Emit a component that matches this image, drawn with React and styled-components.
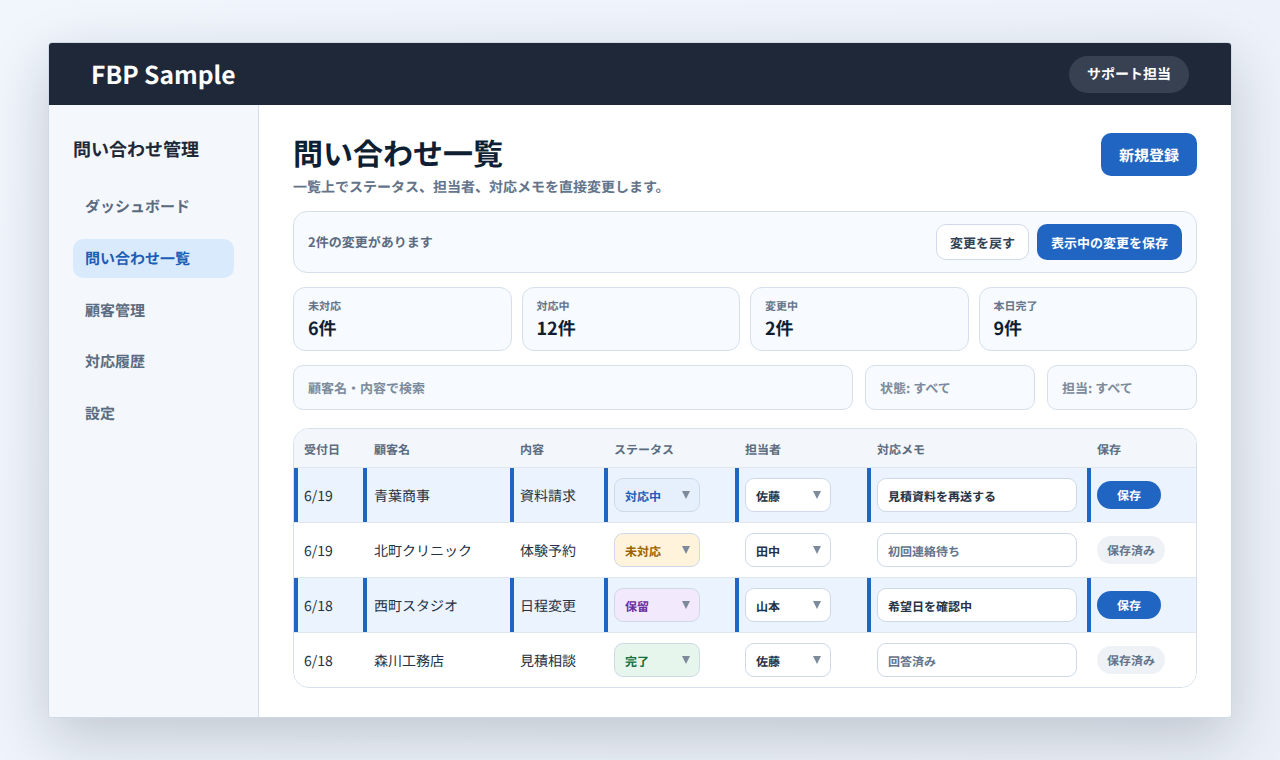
import React from 'react';
import styled, { createGlobalStyle } from 'styled-components';

const GlobalStyle = createGlobalStyle`
  * { box-sizing: border-box; }
  html, body { margin: 0; height: 100%; }
  body {
    background: linear-gradient(135deg, #f1f6fd 0%, #ebf0f8 100%);
    font-family: "Noto Sans CJK JP", "Noto Sans", sans-serif;
    color: #0f1f33;
    overflow: hidden;
    text-rendering: geometricPrecision;
  }
`;

const Page = styled.div`
  height: 760px;
  padding: 42px 48px;
`;

const Shell = styled.div`
  height: 676px;
  display: flex;
  flex-direction: column;
  background: #fff;
  border: 1px solid #d0dae6;
  border-radius: 4px;
  overflow: hidden;
  box-shadow: 0 20px 60px rgba(15, 23, 42, 0.2);
`;

const TopBar = styled.header`
  height: 62px;
  flex: none;
  display: flex;
  align-items: center;
  justify-content: space-between;
  padding: 0 42px;
  background: #1e2838;
`;

const Brand = styled.div`
  font-size: 24.6px;
  font-weight: 700;
  color: #fff;
`;

const UserPill = styled.div`
  height: 37px;
  width: 120px;
  display: flex;
  align-items: center;
  justify-content: center;
  border-radius: 19px;
  background: #374151;
  color: #fff;
  font-size: 14px;
  font-weight: 700;
`;

const Body = styled.div`
  flex: 1;
  display: flex;
  min-height: 0;
`;

const Sidebar = styled.aside`
  width: 210px;
  flex: none;
  padding: 30px 24px;
  background: #f4f8fd;
  border-right: 1px solid #d5dee9;
`;

const SideTitle = styled.div`
  font-size: 18px;
  font-weight: 700;
  line-height: 28px;
  color: #1e2838;
  margin-bottom: 24px;
`;

const NavList = styled.nav`
  display: flex;
  flex-direction: column;
  gap: 12.75px;
`;

const NavItem = styled.div`
  height: 39px;
  display: flex;
  align-items: center;
  padding: 0 12px;
  border-radius: 10px;
  font-size: 15px;
  font-weight: 700;
  color: ${({ $active }) => ($active ? '#1c5db5' : '#5b6b80')};
  background: ${({ $active }) => ($active ? '#d9eafd' : 'transparent')};
`;

const Main = styled.main`
  flex: 1;
  min-width: 0;
  padding: 28px 34px;
  display: flex;
  flex-direction: column;
`;

const TitleRow = styled.div`
  display: flex;
  justify-content: space-between;
  align-items: flex-start;
  margin-bottom: 14px;
`;

const PageTitle = styled.h1`
  margin: 0 0 6px;
  font-size: 30px;
  font-weight: 700;
  line-height: 38px;
  color: #0f1f33;
`;

const Subtitle = styled.p`
  margin: 0;
  font-size: 14px;
  font-weight: 700;
  line-height: 20px;
  color: #64748b;
`;

const PrimaryButton = styled.button`
  font-family: inherit;
  text-rendering: inherit;
  border: none;
  background: #1f65c1;
  color: #fff;
  font-weight: 700;
  font-size: ${({ $large }) => ($large ? '15px' : '13px')};
  height: ${({ $large }) => ($large ? '43px' : '36px')};
  width: ${({ $large }) => ($large ? '96px' : '145px')};
  border-radius: 10px;
  padding: ${({ $large }) => ($large ? '2px 0 0' : '0')};
`;

const GhostButton = styled.button`
  font-family: inherit;
  text-rendering: inherit;
  height: 36px;
  width: 93px;
  padding: 0;
  border: 1px solid #cfdbe8;
  border-radius: 10px;
  background: #fff;
  color: #334155;
  font-size: 13px;
  font-weight: 700;
`;

const ChangeBar = styled.div`
  height: 62px;
  flex: none;
  display: flex;
  align-items: center;
  justify-content: space-between;
  padding: 0 14px;
  background: #f7fafe;
  border: 1px solid #d5e0ec;
  border-radius: 14px;
  margin-bottom: 14px;
`;

const ChangeText = styled.div`
  font-size: 13px;
  font-weight: 700;
  color: #5b6b80;
  margin-bottom: 2px;
`;

const ButtonGroup = styled.div`
  display: flex;
  gap: 8px;
`;

const Stats = styled.div`
  display: grid;
  grid-template-columns: repeat(4, 1fr);
  gap: 10px;
  margin-bottom: 14px;
`;

const StatCard = styled.div`
  height: 64px;
  padding: 10px 14px;
  background: #f7fafe;
  border: 1px solid #d5e0ec;
  border-radius: 12px;
`;

const StatLabel = styled.div`
  font-size: 11px;
  font-weight: 700;
  line-height: 16px;
  color: #64748b;
`;

const StatValue = styled.div`
  font-size: 18px;
  font-weight: 700;
  line-height: 26px;
  margin-top: 1px;
  color: #0f1f33;
`;

const Filters = styled.div`
  display: flex;
  gap: 12px;
  margin-bottom: 18px;
`;

const FilterBox = styled.div`
  height: 45px;
  flex: ${({ $width }) => ($width ? `0 0 ${$width}px` : '1')};
  display: flex;
  align-items: center;
  padding: 0 14px;
  background: #f7fafe;
  border: 1px solid #d5e0ec;
  border-radius: 10px;
  font-size: 13px;
  font-weight: 700;
  color: #7c8a9c;
`;

const TableWrap = styled.div`
  border: 1px solid #d5e0ec;
  border-radius: 16px;
  overflow: hidden;
`;

const Table = styled.table`
  width: 100%;
  table-layout: fixed;
  border-collapse: separate;
  border-spacing: 0;
`;

const Th = styled.th`
  height: 39px;
  padding: 2px 10px 0;
  padding-left: ${({ $wide }) => ($wide ? '11px' : '10px')};
  text-align: left;
  font-size: 12px;
  font-weight: 700;
  color: #5b6b80;
  background: #f3f7fb;
  border-bottom: 1px solid #e0e7ef;
`;

const Td = styled.td`
  height: ${({ $last }) => ($last ? '54px' : '55px')};
  padding: ${({ $text }) => ($text ? '2px 10px 0' : '0 10px')};
  padding-left: ${({ $wide }) => ($wide ? '11px' : '10px')};
  font-size: 14px;
  font-weight: 400;
  color: #243244;
  background: ${({ $changed }) => ($changed ? '#ebf4fe' : '#fff')};
  border-bottom: ${({ $last }) => ($last ? 'none' : '1px solid #e0e7ef')};
  box-shadow: ${({ $changed }) => ($changed ? 'inset 4px 0 0 #1f65c1' : 'none')};
`;

const tones = {
  active: { bg: '#e6f0fc', fg: '#1c5db5' },
  todo: { bg: '#fff3dc', fg: '#9a6200' },
  hold: { bg: '#f3e9fc', fg: '#6b2fa0' },
  done: { bg: '#e6f6ec', fg: '#14703c' },
};

const SelectBox = styled.div`
  width: 86px;
  height: 34px;
  display: flex;
  align-items: center;
  justify-content: space-between;
  padding: 2px 9px 0 10px;
  border: 1px solid #cdd9e8;
  border-radius: 9px;
  font-size: 12px;
  font-weight: 700;
  background: ${({ $tone }) => ($tone ? tones[$tone].bg : '#fff')};
  color: ${({ $tone }) => ($tone ? tones[$tone].fg : '#243244')};
`;

const Caret = styled.span`
  width: 0;
  height: 0;
  margin-top: -2px;
  border-left: 4px solid transparent;
  border-right: 4px solid transparent;
  border-top: 8px solid #7c8a9c;
`;

const MemoBox = styled.div`
  width: 200px;
  height: 34px;
  display: flex;
  align-items: center;
  padding: 2px 10px 0;
  background: #fff;
  border: 1px solid #cdd9e8;
  border-radius: 9px;
  font-size: 12px;
  font-weight: 700;
  color: ${({ $changed }) => ($changed ? '#243244' : '#64748b')};
`;

const SaveButton = styled.button`
  font-family: inherit;
  text-rendering: inherit;
  display: block;
  height: 28px;
  width: ${({ $saved }) => ($saved ? '68px' : '64px')};
  padding: 0;
  border: none;
  border-radius: 14px;
  font-size: 12px;
  font-weight: 700;
  background: ${({ $saved }) => ($saved ? '#eef2f6' : '#1f65c1')};
  color: ${({ $saved }) => ($saved ? '#64748b' : '#fff')};
`;

const columns = [
  ['受付日', 69],
  ['顧客名', 147],
  ['内容', 94],
  ['ステータス', 131],
  ['担当者', 132],
  ['対応メモ', 220],
  ['保存', 109],
];

const navItems = ['ダッシュボード', '問い合わせ一覧', '顧客管理', '対応履歴', '設定'];

const stats = [
  ['未対応', '6件'],
  ['対応中', '12件'],
  ['変更中', '2件'],
  ['本日完了', '9件'],
];

const rows = [
  { date: '6/19', name: '青葉商事', topic: '資料請求', status: '対応中', tone: 'active', owner: '佐藤', memo: '見積資料を再送する', changed: true },
  { date: '6/19', name: '北町クリニック', topic: '体験予約', status: '未対応', tone: 'todo', owner: '田中', memo: '初回連絡待ち', changed: false },
  { date: '6/18', name: '西町スタジオ', topic: '日程変更', status: '保留', tone: 'hold', owner: '山本', memo: '希望日を確認中', changed: true },
  { date: '6/18', name: '森川工務店', topic: '見積相談', status: '完了', tone: 'done', owner: '佐藤', memo: '回答済み', changed: false },
];

export default function App() {
  return (
    <Page>
      <GlobalStyle />
      <Shell>
        <TopBar>
          <Brand>FBP Sample</Brand>
          <UserPill>サポート担当</UserPill>
        </TopBar>
        <Body>
          <Sidebar>
            <SideTitle>問い合わせ管理</SideTitle>
            <NavList>
              {navItems.map((item) => (
                <NavItem key={item} $active={item === '問い合わせ一覧'}>{item}</NavItem>
              ))}
            </NavList>
          </Sidebar>
          <Main>
            <TitleRow>
              <div>
                <PageTitle>問い合わせ一覧</PageTitle>
                <Subtitle>一覧上でステータス、担当者、対応メモを直接変更します。</Subtitle>
              </div>
              <PrimaryButton $large>新規登録</PrimaryButton>
            </TitleRow>
            <ChangeBar>
              <ChangeText>2件の変更があります</ChangeText>
              <ButtonGroup>
                <GhostButton>変更を戻す</GhostButton>
                <PrimaryButton>表示中の変更を保存</PrimaryButton>
              </ButtonGroup>
            </ChangeBar>
            <Stats>
              {stats.map(([label, value]) => (
                <StatCard key={label}>
                  <StatLabel>{label}</StatLabel>
                  <StatValue>{value}</StatValue>
                </StatCard>
              ))}
            </Stats>
            <Filters>
              <FilterBox>顧客名・内容で検索</FilterBox>
              <FilterBox $width={170}>状態: すべて</FilterBox>
              <FilterBox $width={150}>担当: すべて</FilterBox>
            </Filters>
            <TableWrap>
              <Table>
                <colgroup>
                  {columns.map(([label, width]) => (
                    <col key={label} width={width} />
                  ))}
                </colgroup>
                <thead>
                  <tr>
                    {columns.map(([label], i) => (
                      <Th key={label} $wide={i === 1}>{label}</Th>
                    ))}
                  </tr>
                </thead>
                <tbody>
                  {rows.map((row, i) => {
                    const cell = { $changed: row.changed, $last: i === rows.length - 1 };
                    return (
                      <tr key={row.name}>
                        <Td {...cell} $text>{row.date}</Td>
                        <Td {...cell} $text $wide>{row.name}</Td>
                        <Td {...cell} $text>{row.topic}</Td>
                        <Td {...cell}>
                          <SelectBox $tone={row.tone}>{row.status}<Caret /></SelectBox>
                        </Td>
                        <Td {...cell}>
                          <SelectBox>{row.owner}<Caret /></SelectBox>
                        </Td>
                        <Td {...cell}>
                          <MemoBox $changed={row.changed}>{row.memo}</MemoBox>
                        </Td>
                        <Td {...cell}>
                          <SaveButton $saved={!row.changed}>{row.changed ? '保存' : '保存済み'}</SaveButton>
                        </Td>
                      </tr>
                    );
                  })}
                </tbody>
              </Table>
            </TableWrap>
          </Main>
        </Body>
      </Shell>
    </Page>
  );
}
